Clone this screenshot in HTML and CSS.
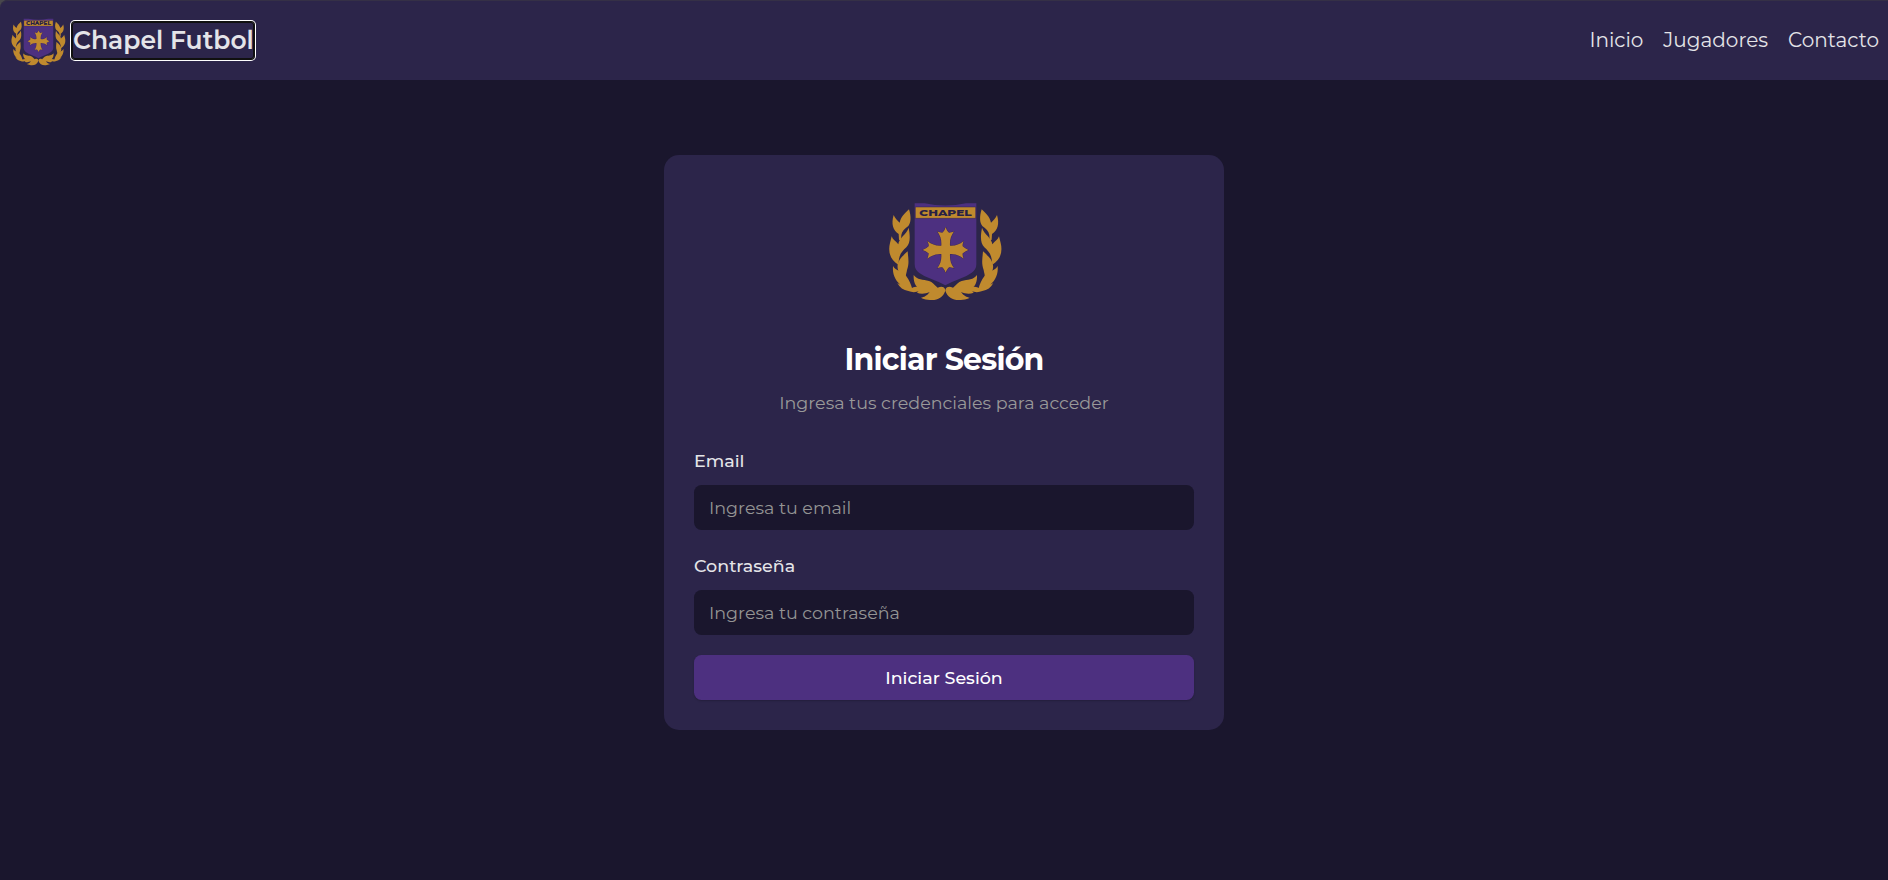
FILE: index.html
```html
<!DOCTYPE html>
<html lang="es">
<head>
<meta charset="utf-8">
<title>Chapel Futbol</title>
<link rel="stylesheet" href="styles.css">
</head>
<body>
<svg class="defs" aria-hidden="true">
  <defs>
    <g id="branch" fill="#c08a2e">
      <path d="M72 74C76 84 83 90 90 97C94 79 105 69 118 57C125 80 124 97 116 107C105 115 97 122 95 134L94 152L88 148L87 131C70 121 64 100 72 74Z"/>
      <path d="M66 138C69 148 78 152 86 162C87 143 110 133 117 112C122 140 122 158 110 171C98 182 90 192 88 206L86 223C63 210 54 186 61 158Z"/>
      <path d="M114 183C115 200 120 218 112 239C111 246 109 251 108 260L90 250C73 220 93 202 114 183Z"/>
      <path d="M70 227C78 242 98 242 109 256C119 270 124 281 127 293C141 287 152 290 163 293C151 305 132 309 116 302C101 300 90 292 83 278L92 283C76 269 68 251 70 227Z"/>
      <path d="M132 254C142 269 160 267 178 272C188 275 195 284 204 292C214 288 222 288 226 296L227 301C219 324 199 333 174 328C165 327 159 325 154 322C163 320 172 317 180 305C167 311 153 312 142 307L151 297C136 288 131 273 132 254Z"/>
    </g>
    <symbol id="crest" viewBox="37 -16 375 375">
      <use href="#branch"/>
      <use href="#branch" transform="matrix(-1 0 0 1 454 0)"/>
      <path fill="#4d3080" d="M135 39H165Q227 52 289 39H320V222Q320 238 306 247Q290 259 267 267Q243 276 227 285Q211 276 187 267Q164 259 148 247Q135 238 135 222Z"/>
      <path fill="#c08a2e" stroke="#33234a" stroke-width="1.5" d="M137 50H318V84H137Z"/>
      <text class="crest-name" x="227.500" y="77.500" text-anchor="middle" textLength="157" lengthAdjust="spacingAndGlyphs">CHAPEL</text>
      <path fill="#c08a2e" stroke="#3c2858" stroke-width="3" paint-order="stroke" d="M228 110C231 120 234 124 238 127C244 127 248 126 253 123C243 138 240 149 241 166C257 167 269 163 282 152C279 160 278 164 279 168C284 172 289 176 296 179C289 182 284 185 279 189C278 193 279 198 282 205C269 195 257 190 241 191C240 208 243 220 253 234C248 231 244 231 238 231C234 235 231 239 228 247C225 239 222 235 218 231C212 231 208 231 203 234C213 220 216 208 215 191C199 190 187 195 173 205C176 198 177 193 177 189C172 185 167 182 159 179C167 176 172 172 177 168C178 164 177 160 173 152C187 163 199 167 215 166C216 149 213 138 203 123C208 126 212 127 218 127C222 124 225 120 228 110Z"/>
    </symbol>
  </defs>
</svg>
<div class="window-edge">
<header class="topbar">
  <div class="brand">
    <svg class="brand-logo" role="img" aria-label="Chapel"><use href="#crest"/></svg>
    <a class="brand-name">Chapel Futbol</a>
  </div>
  <nav class="nav">
    <a>Inicio</a>
    <a>Jugadores</a>
    <a>Contacto</a>
  </nav>
</header>
</div>
<main class="page">
  <form class="card">
    <svg class="card-logo" role="img" aria-label="Chapel"><use href="#crest"/></svg>
    <h1 class="title">Iniciar Sesión</h1>
    <p class="subtitle">Ingresa tus credenciales para acceder</p>
    <label class="label label-first" for="email">Email</label>
    <input class="field" id="email" type="email" placeholder="Ingresa tu email">
    <label class="label" for="password">Contraseña</label>
    <input class="field" id="password" type="password" placeholder="Ingresa tu contraseña">
    <button class="submit" type="button">Iniciar Sesión</button>
  </form>
</main>
</body>
</html>
```
FILE: styles.css
```css
* { box-sizing: border-box; }
body { margin: 0; min-height: 880px; background: #1a162d; color: #e4e4e8; font-family: Montserrat, Inter, sans-serif; }
.defs { position: absolute; width: 0; height: 0; }
.crest-name { font: 800 27px Montserrat, Inter, sans-serif; fill: #282045; }
.window-edge { background: #48474c; }
.topbar { display: flex; align-items: center; justify-content: space-between; height: 80px; padding: 0 9px 0 8px; background: #2c254a; box-shadow: inset 0 1px #353046; border-top-left-radius: 8px; }
.brand { display: flex; align-items: center; gap: 4px; }
.brand-logo { width: 60px; height: 60px; }
.brand-name { height: 37px; margin-top: 1px; padding: 0 0.5px 0 1px; line-height: 36px; font-size: 25px; font-weight: 600; border-radius: 3px; box-shadow: inset 0 0 0 1px #101010, 0 0 0 1px #101010, 0 0 0 2px #fff; }
.nav { display: flex; gap: 20px; font-size: 20px; }
.page { display: flex; justify-content: center; padding-top: 75px; }
.card { display: flex; flex-direction: column; width: 560px; height: 575px; padding: 30px; border-radius: 15px; background: #2c254a; }
.card-logo { align-self: center; width: 125px; height: 125px; }
.title { margin: 31px 0 0; text-align: center; font-size: 30px; line-height: 37.5px; letter-spacing: -0.75px; color: #fff; }
.subtitle { margin: 11.5px 0 0; text-align: center; font-size: 17.5px; line-height: 25px; color: #999; }
.label { margin-top: 23px; font-size: 17.5px; line-height: 25px; font-weight: 500; }
.label-first { margin-top: 33px; }
.field { height: 45px; margin-top: 12px; padding: 0 15px; border: 0; border-radius: 7.5px; background: #1a162d; font: 17.5px Montserrat, Inter, sans-serif; }
.field::placeholder { color: #949494; }
.submit { height: 45px; margin-top: 20px; border: 0; border-radius: 7.5px; background: #4d3080; box-shadow: 0 1px 2px rgba(0, 0, 0, 0.2); color: #fff; font: 500 17.5px Montserrat, Inter, sans-serif; }
```
